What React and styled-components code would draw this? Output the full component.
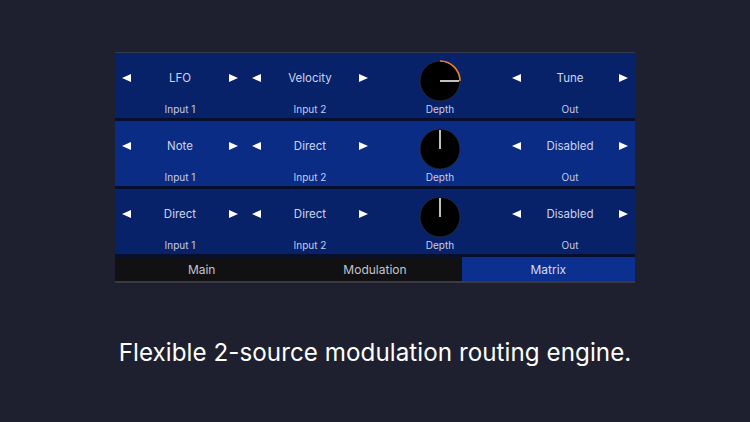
import React from "react";
import styled, { createGlobalStyle } from "styled-components";

const Global = createGlobalStyle`
  html, body { margin: 0; padding: 0; background: #1e2030; }
  body { width: 750px; height: 422px; overflow: hidden; font-family: Inter, "Noto Sans", sans-serif; }
`;

const Page = styled.div`
  width: 750px;
  height: 422px;
  display: flex;
  flex-direction: column;
  align-items: center;
  padding-top: 52px;
  box-sizing: border-box;
`;

const Panel = styled.div`
  width: 520px;
  display: flex;
  flex-direction: column;
  background: #06102e;
  border-top: 1px solid #34384a;
  border-bottom: 2px solid #3a3a40;
`;

const Row = styled.div`
  height: 65px;
  display: grid;
  grid-template-columns: repeat(4, 1fr);
  background: ${(p) => (p.$bright ? "#0b2c85" : "#08226a")};
  margin-bottom: 3px;
`;

const Cell = styled.div`
  display: flex;
  flex-direction: column;
  align-items: stretch;
`;

const Selector = styled.div`
  height: 50px;
  display: flex;
  align-items: center;
  justify-content: space-between;
  padding: 0 7px;
`;

const Arrow = styled.span`
  width: 0;
  height: 0;
  border-top: 4.5px solid transparent;
  border-bottom: 4.5px solid transparent;
  ${(p) =>
    p.$dir === "left"
      ? "border-right: 9px solid #ffffff;"
      : "border-left: 9px solid #ffffff;"}
`;

const Value = styled.span`
  color: #cbd4ee;
  font-size: 11.5px;
  flex: 1;
  text-align: center;
`;

const SubLabel = styled.div`
  color: #c4cce6;
  font-size: 10px;
  line-height: 12px;
  text-align: center;
`;

const KnobBox = styled.div`
  height: 50px;
  display: flex;
  align-items: flex-start;
  justify-content: center;
  padding-top: 7px;
  box-sizing: border-box;
`;

const TabBar = styled.div`
  display: grid;
  grid-template-columns: repeat(3, 1fr);
  height: 24px;
`;

const Tab = styled.div`
  display: flex;
  align-items: center;
  justify-content: center;
  font-size: 12px;
  color: ${(p) => (p.$active ? "#d6ddf2" : "#c2c4cc")};
  background: ${(p) => (p.$active ? "#0b3090" : "#111114")};
`;

const Caption = styled.div`
  margin-top: 55px;
  color: #ffffff;
  font-size: 24.2px;
  line-height: 29px;
  letter-spacing: 0.05px;
`;

function Knob({ value }) {
  const cx = 21, cy = 21, r = 20;
  const ang = -Math.PI / 2 + value * (Math.PI * 2);
  const ex = cx + 19 * Math.cos(ang);
  const ey = cy + 19 * Math.sin(ang);
  const ax = cx + r * Math.cos(ang);
  const ay = cy + r * Math.sin(ang);
  return (
    <svg width="42" height="42" viewBox="0 0 42 42">
      <circle cx={cx} cy={cy} r={r} fill="#000" stroke="#2a2f44" strokeWidth="0.8" />
      {value > 0 && (
        <path
          d={`M ${cx} ${cy - r} A ${r} ${r} 0 ${value > 0.5 ? 1 : 0} 1 ${ax} ${ay}`}
          fill="none"
          stroke="#e8822a"
          strokeWidth="1.6"
        />
      )}
      <line x1={cx} y1={cy} x2={ex} y2={ey} stroke="#f2f2f2" strokeWidth="1.6" />
    </svg>
  );
}

function SelectCell({ value, label }) {
  return (
    <Cell>
      <Selector>
        <Arrow $dir="left" />
        <Value>{value}</Value>
        <Arrow $dir="right" />
      </Selector>
      <SubLabel>{label}</SubLabel>
    </Cell>
  );
}

const rows = [
  { in1: "LFO", in2: "Velocity", depth: 0.25, out: "Tune", bright: false },
  { in1: "Note", in2: "Direct", depth: 0, out: "Disabled", bright: true },
  { in1: "Direct", in2: "Direct", depth: 0, out: "Disabled", bright: false },
];

export default function App() {
  return (
    <>
      <Global />
      <Page>
        <Panel>
          {rows.map((r, i) => (
            <Row key={i} $bright={r.bright}>
              <SelectCell value={r.in1} label="Input 1" />
              <SelectCell value={r.in2} label="Input 2" />
              <Cell>
                <KnobBox>
                  <Knob value={r.depth} />
                </KnobBox>
                <SubLabel>Depth</SubLabel>
              </Cell>
              <SelectCell value={r.out} label="Out" />
            </Row>
          ))}
          <TabBar>
            <Tab>Main</Tab>
            <Tab>Modulation</Tab>
            <Tab $active>Matrix</Tab>
          </TabBar>
        </Panel>
        <Caption>Flexible 2-source modulation routing engine.</Caption>
      </Page>
    </>
  );
}
